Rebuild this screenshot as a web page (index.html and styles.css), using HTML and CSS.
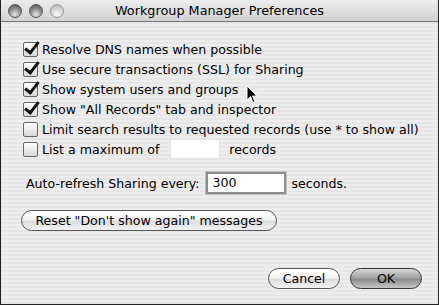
FILE: index.html
```html
<!DOCTYPE html>
<html lang="en">
<head>
  <meta charset="UTF-8">
  <title>Workgroup Manager Preferences</title>
  <link rel="stylesheet" href="styles.css">
</head>
<body>
  <div class="window">
    <!-- title bar -->
    <div class="titlebar">
      <div class="lights">
        <span class="light"></span>
        <span class="light"></span>
        <span class="light dim"></span>
      </div>
      <div class="title">Workgroup Manager Preferences</div>
    </div>

    <div class="content">
      <div class="options">
        <label class="row"><span class="box checked"></span>Resolve DNS names when possible</label>
        <label class="row"><span class="box checked"></span>Use secure transactions (SSL) for Sharing</label>
        <label class="row"><span class="box checked"></span>Show system users and groups</label>
        <label class="row"><span class="box checked"></span>Show "All Records" tab and inspector</label>
        <label class="row"><span class="box"></span>Limit search results to requested records (use * to show all)</label>
        <label class="row"><span class="box"></span>List a maximum of<span class="field blank"></span>records</label>
      </div>

      <div class="refresh">
        <span>Auto-refresh Sharing every:</span>
        <span class="field focus">300</span>
        <span>seconds.</span>
      </div>

      <button class="btn reset">Reset "Don't show again" messages</button>

      <div class="actions">
        <button class="btn">Cancel</button>
        <button class="btn default">OK</button>
      </div>
    </div>

    <!-- mouse pointer -->
    <svg class="cursor" width="12" height="19" viewBox="0 0 12 19">
      <path d="M1 1 L1 15 L4.5 11.5 L7 17.5 L9 16.6 L6.6 11 L11 11 Z" fill="#000" stroke="#fff" stroke-width="1"/>
    </svg>
  </div>
</body>
</html>
```

FILE: styles.css
```css
html, body {
  margin: 0;
  padding: 0;
  background: #fff;
}
body {
  font-family: 'DejaVu Sans', 'Liberation Sans', sans-serif;
  font-size: 12.6px;
  color: #000;
}
.window {
  position: relative;
  width: 437px;
  height: 304px;
  border: 1px solid #222;
  border-top: none;
  background: repeating-linear-gradient(to bottom, #ededed 0, #ededed 2px, #e6e6e6 2px, #e6e6e6 4px);
  overflow: hidden;
}
.titlebar {
  height: 21px;
  border-bottom: 1px solid #777;
  background: linear-gradient(to bottom, #ececec, #d2d2d2);
  display: flex;
  align-items: center;
  position: relative;
}
.lights {
  display: flex;
  gap: 7px;
  padding-left: 7px;
}
.light {
  width: 14px;
  height: 14px;
  border-radius: 50%;
  border: 1px solid #555;
  box-sizing: border-box;
  background: radial-gradient(circle at 50% 80%, #e6e6e6 0, #8a8a8a 55%, #4a4a4a 100%);
}
.light.dim {
  border-color: #999;
  background: radial-gradient(circle at 50% 80%, #fafafa 0, #cfcfcf 60%, #a8a8a8 100%);
}
.title {
  position: absolute;
  left: 0;
  right: 0;
  text-align: center;
  font-size: 12.8px;
  top: 3px;
}
.content {
  padding: 17px 0 0 22px;
}
.options {
  display: flex;
  flex-direction: column;
}
.row {
  display: flex;
  align-items: center;
  height: 20px;
  white-space: nowrap;
}
.box {
  width: 13px;
  height: 13px;
  border: 1px solid #666;
  border-radius: 2px;
  background: linear-gradient(to bottom, #fff, #d8d8d8);
  margin-right: 4px;
  position: relative;
  flex-shrink: 0;
}
.box.checked::after {
  content: "";
  position: absolute;
  left: 4px;
  top: -4px;
  width: 5px;
  height: 12px;
  border-right: 3px solid #111;
  border-bottom: 3px solid #111;
  transform: rotate(38deg);
}
.field {
  display: inline-block;
  background: #fff;
  box-sizing: border-box;
}
.field.blank {
  width: 50px;
  height: 20px;
  margin: 0 9px 0 11px;
  border: 1px solid #e4e4e4;
}
.refresh {
  display: flex;
  align-items: center;
  gap: 6px;
  margin-top: 13px;
  padding-left: 3px;
  white-space: nowrap;
}
.field.focus {
  width: 80px;
  height: 22px;
  border: 2px solid #8d8d8d;
  box-shadow: 0 0 0 1px #c4c4c4;
  padding-left: 5px;
  line-height: 18px;
}
.btn {
  font-family: inherit;
  font-size: 12.6px;
  height: 21px;
  padding: 0 10px;
  border: 1px solid #555;
  border-radius: 11px;
  background: linear-gradient(to bottom, #ffffff 0, #f3f3f3 45%, #dcdcdc 55%, #f2f2f2 100%);
  color: #000;
  white-space: nowrap;
}
.reset {
  display: block;
  margin-top: 16px;
  margin-left: -2px;
  width: 256px;
}
.actions {
  display: flex;
  justify-content: flex-end;
  gap: 10px;
  margin-top: 37px;
  padding-right: 16px;
}
.actions .btn {
  width: 72px;
}
.btn.default {
  background: linear-gradient(to bottom, #d8d8d8 0, #a4a4a4 45%, #8c8c8c 55%, #c8c8c8 100%);
  border-color: #333;
}
.cursor {
  position: absolute;
  left: 245px;
  top: 85px;
}
```
